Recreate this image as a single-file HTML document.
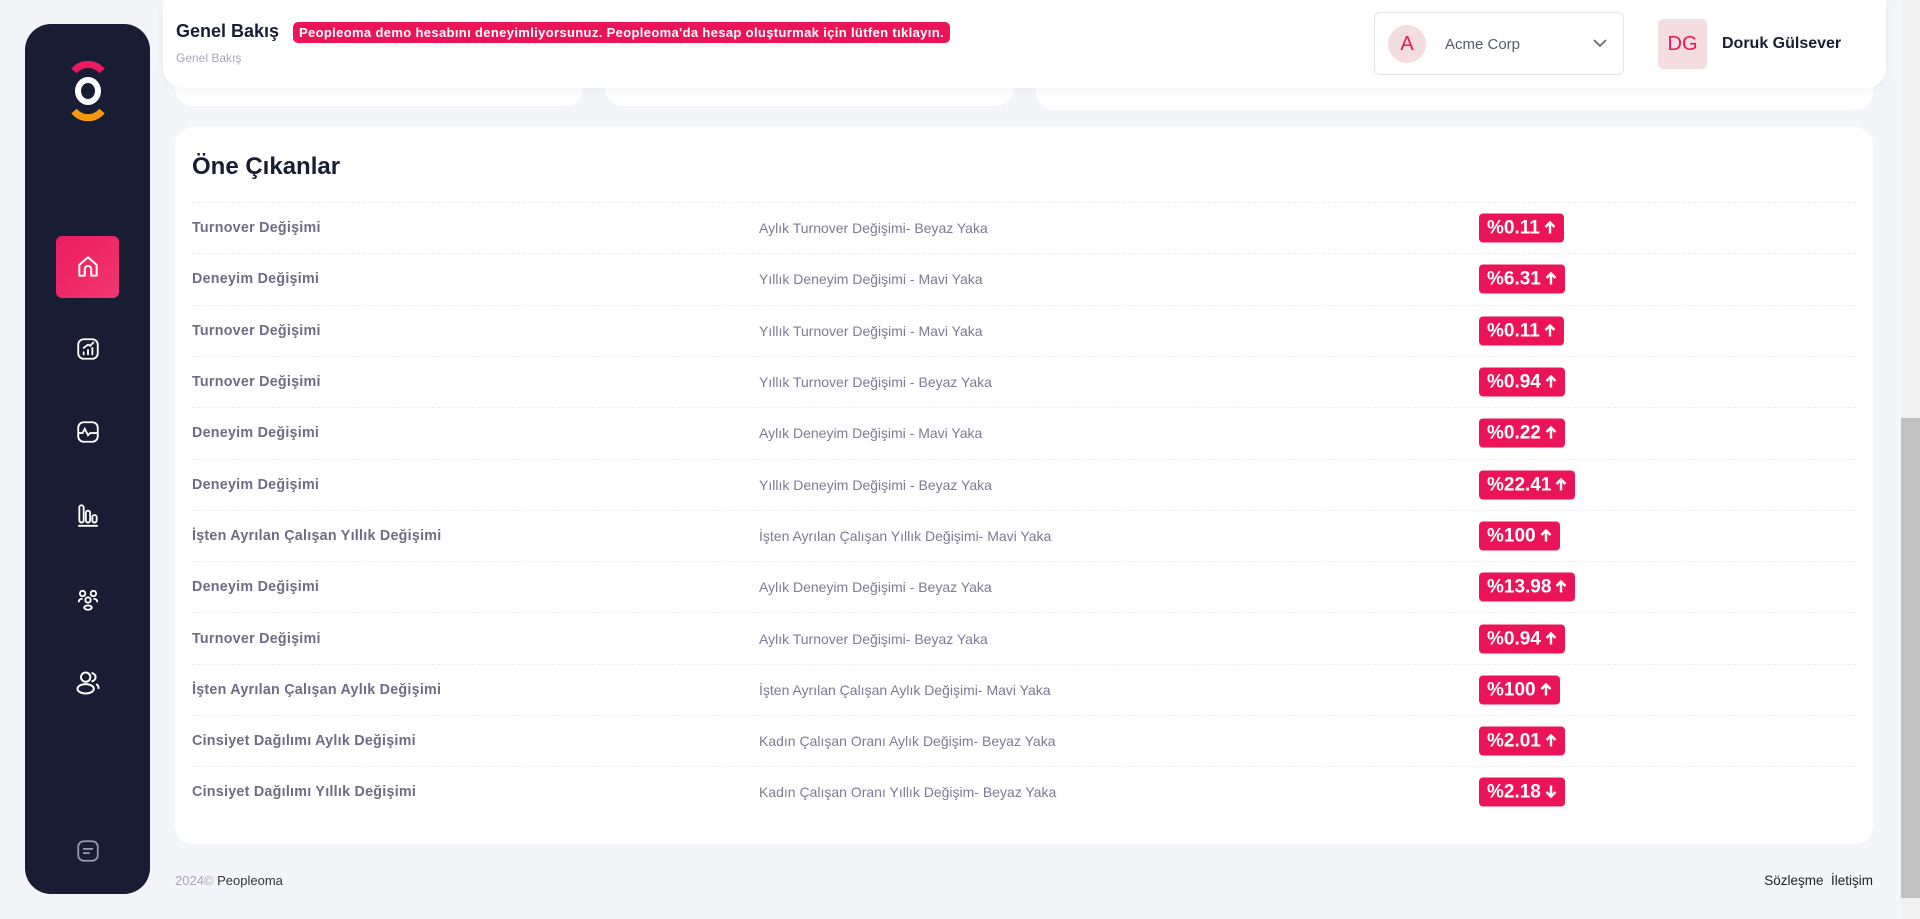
<!DOCTYPE html>
<html><head><meta charset="utf-8"><style>
*{box-sizing:border-box;margin:0;padding:0}
body{width:1920px;height:919px;overflow:hidden;background:#f3f5f9;font-family:"Liberation Sans",sans-serif;position:relative}
.sb{position:absolute;left:25px;top:24px;width:125px;height:870px;background:#181d33;border-radius:26px}
.ic{position:absolute;left:50%;transform:translate(-50%,-50%)}
.home{position:absolute;left:31px;top:212px;width:63px;height:62px;border-radius:6px;background:linear-gradient(135deg,#ec1b5f,#f0386e)}
.hdr{position:absolute;left:163px;top:0;width:1723px;height:88px;background:#fff;border-radius:0 0 20px 20px;box-shadow:0 2px 10px rgba(0,0,0,.05);z-index:3}
.card{position:absolute;background:#fff;border-radius:18px}
.row{position:absolute;left:17px;right:17px;height:51.3px;border-top:1px dashed #eceef3;font-size:14px}
.row span{position:absolute;top:50%;transform:translateY(-50%)}
.c1{left:0;font-weight:bold;color:#6e6c85;font-size:14.3px;letter-spacing:.25px}
.c2{left:567px;color:#7d7a93}
.b{left:1287px;background:#ec1459;color:#fff;font-weight:bold;font-size:19px;height:29px;line-height:29px;padding:0 8px;border-radius:4px;white-space:nowrap}
.b svg{margin-left:4px;vertical-align:-1px}
</style></head><body>
<div class="sb">
<svg class="ic" style="top:67px" width="40" height="64" viewBox="0 0 40 64"><path d="M6 12 A18 18 0 0 1 34 12" stroke="#ec1b5f" stroke-width="7" fill="none"/><path d="M6 52 A18 18 0 0 0 34 52" stroke="#f59a0c" stroke-width="7" fill="none"/><ellipse cx="20" cy="32" rx="10" ry="11" stroke="#fff" stroke-width="6" fill="none"/></svg>
<div class="home"></div>
<svg class="ic" style="top:243px" width="26" height="26" viewBox="0 0 24 24" fill="none" stroke="#fff" stroke-width="1.8" stroke-linejoin="round"><path d="M4 10 L12 3 L20 10 V20 H15 V14 A3 3 0 0 0 9 14 V20 H4 Z"/></svg>
<svg class="ic" style="top:325px" width="26" height="26" viewBox="0 0 24 24" fill="none" stroke="#fff" stroke-width="1.7" stroke-linecap="round"><rect x="3" y="3" width="18" height="18" rx="5"/><path d="M8 17v-2M12 17v-4M16 17v-6M8 11l4-3 2 1 3-3"/></svg>
<svg class="ic" style="top:408px" width="26" height="26" viewBox="0 0 24 24" fill="none" stroke="#fff" stroke-width="1.7"><rect x="3" y="3" width="18" height="18" rx="5"/><path d="M3 13h4l2-4 3 6 2-2h7"/></svg>
<svg class="ic" style="top:491px" width="26" height="26" viewBox="0 0 24 24" fill="none" stroke="#fff" stroke-width="1.7"><rect x="4" y="3" width="4" height="16" rx="2"/><rect x="10" y="8" width="4" height="11" rx="2"/><rect x="16" y="12" width="4" height="7" rx="2"/><path d="M3 22h18"/></svg>
<svg class="ic" style="top:576px" width="26" height="26" viewBox="0 0 24 24" fill="none" stroke="#fff" stroke-width="1.7"><circle cx="7" cy="6" r="2.5"/><circle cx="17" cy="6" r="2.5"/><circle cx="12" cy="12" r="2.5"/><ellipse cx="12" cy="19" rx="3.5" ry="2"/><path d="M4 14a3 2 0 0 1 3-3M20 14a3 2 0 0 0-3-3"/></svg>
<svg class="ic" style="top:659px" width="28" height="28" viewBox="0 0 24 24" fill="none" stroke="#fff" stroke-width="1.7"><circle cx="10" cy="7" r="4"/><ellipse cx="10" cy="17" rx="7" ry="4"/><path d="M15 3.5a3.5 3.5 0 0 1 0 7M19 13a4 4 0 0 1 2 4"/></svg>
<svg class="ic" style="top:827px" width="26" height="26" viewBox="0 0 24 24" fill="none" stroke="#9a9cad" stroke-width="1.6" stroke-linecap="round"><rect x="3" y="3" width="18" height="18" rx="5"/><path d="M8 10h8M8 14h5"/></svg>
</div>
<div class="hdr">
<div style="position:absolute;left:13px;top:21px;font-size:18px;font-weight:bold;color:#181d33">Genel Bakış</div>
<div style="position:absolute;left:130px;top:22px;height:21px;line-height:21px;padding:0 6px;background:#ec1459;color:#fff;font-weight:bold;font-size:13px;letter-spacing:.35px;border-radius:5px">Peopleoma demo hesabını deneyimliyorsunuz. Peopleoma'da hesap oluşturmak için lütfen tıklayın.</div>
<div style="position:absolute;left:13px;top:51px;font-size:12px;color:#a6a8b8">Genel Bakış</div>
<div style="position:absolute;left:1211px;top:12px;width:250px;height:63px;border:1px solid #e4e5ec;border-radius:6px">
<div style="position:absolute;left:13px;top:12px;width:38px;height:38px;border-radius:50%;background:#f4dde1;color:#ec1459;font-size:20px;text-align:center;line-height:38px">A</div>
<div style="position:absolute;left:70px;top:23px;font-size:15px;color:#555a6e">Acme Corp</div>
<svg style="position:absolute;left:218px;top:25px" width="14" height="10" viewBox="0 0 14 10" fill="none" stroke="#666" stroke-width="1.6"><path d="M1 2l6 6 6-6"/></svg>
</div>
<div style="position:absolute;left:1495px;top:19px;width:49px;height:50px;border-radius:5px;background:#f4dde1;color:#ec1459;font-size:20px;text-align:center;line-height:50px">DG</div>
<div style="position:absolute;left:1559px;top:35px;font-size:16px;font-weight:bold;color:#181d33">Doruk Gülsever</div>
</div>
<div class="card" style="left:175px;top:60px;width:408px;height:46px"></div>
<div class="card" style="left:605px;top:60px;width:409px;height:46px"></div>
<div class="card" style="left:1036px;top:60px;width:837px;height:50px"></div>
<div class="card" style="left:175px;top:127px;width:1698px;height:717px">
<div style="position:absolute;left:17px;top:26px;font-size:24px;font-weight:bold;color:#181d33">Öne Çıkanlar</div>
<div style="position:absolute;left:0;top:75px;width:100%">
<div class="row" style="top:0"><span class="c1">Turnover Değişimi</span><span class="c2">Aylık Turnover Değişimi- Beyaz Yaka</span><span class="b">%0.11<svg width="12" height="14" viewBox="0 0 12 14" fill="none" stroke="#fff" stroke-width="2.4"><path d="M6 13V2M1.5 6.5L6 2l4.5 4.5"/></svg></span></div>
<div class="row" style="top:51.3px"><span class="c1">Deneyim Değişimi</span><span class="c2">Yıllık Deneyim Değişimi - Mavi Yaka</span><span class="b">%6.31<svg width="12" height="14" viewBox="0 0 12 14" fill="none" stroke="#fff" stroke-width="2.4"><path d="M6 13V2M1.5 6.5L6 2l4.5 4.5"/></svg></span></div>
<div class="row" style="top:102.6px"><span class="c1">Turnover Değişimi</span><span class="c2">Yıllık Turnover Değişimi - Mavi Yaka</span><span class="b">%0.11<svg width="12" height="14" viewBox="0 0 12 14" fill="none" stroke="#fff" stroke-width="2.4"><path d="M6 13V2M1.5 6.5L6 2l4.5 4.5"/></svg></span></div>
<div class="row" style="top:153.9px"><span class="c1">Turnover Değişimi</span><span class="c2">Yıllık Turnover Değişimi - Beyaz Yaka</span><span class="b">%0.94<svg width="12" height="14" viewBox="0 0 12 14" fill="none" stroke="#fff" stroke-width="2.4"><path d="M6 13V2M1.5 6.5L6 2l4.5 4.5"/></svg></span></div>
<div class="row" style="top:205.2px"><span class="c1">Deneyim Değişimi</span><span class="c2">Aylık Deneyim Değişimi - Mavi Yaka</span><span class="b">%0.22<svg width="12" height="14" viewBox="0 0 12 14" fill="none" stroke="#fff" stroke-width="2.4"><path d="M6 13V2M1.5 6.5L6 2l4.5 4.5"/></svg></span></div>
<div class="row" style="top:256.5px"><span class="c1">Deneyim Değişimi</span><span class="c2">Yıllık Deneyim Değişimi - Beyaz Yaka</span><span class="b">%22.41<svg width="12" height="14" viewBox="0 0 12 14" fill="none" stroke="#fff" stroke-width="2.4"><path d="M6 13V2M1.5 6.5L6 2l4.5 4.5"/></svg></span></div>
<div class="row" style="top:307.8px"><span class="c1">İşten Ayrılan Çalışan Yıllık Değişimi</span><span class="c2">İşten Ayrılan Çalışan Yıllık Değişimi- Mavi Yaka</span><span class="b">%100<svg width="12" height="14" viewBox="0 0 12 14" fill="none" stroke="#fff" stroke-width="2.4"><path d="M6 13V2M1.5 6.5L6 2l4.5 4.5"/></svg></span></div>
<div class="row" style="top:359.1px"><span class="c1">Deneyim Değişimi</span><span class="c2">Aylık Deneyim Değişimi - Beyaz Yaka</span><span class="b">%13.98<svg width="12" height="14" viewBox="0 0 12 14" fill="none" stroke="#fff" stroke-width="2.4"><path d="M6 13V2M1.5 6.5L6 2l4.5 4.5"/></svg></span></div>
<div class="row" style="top:410.4px"><span class="c1">Turnover Değişimi</span><span class="c2">Aylık Turnover Değişimi- Beyaz Yaka</span><span class="b">%0.94<svg width="12" height="14" viewBox="0 0 12 14" fill="none" stroke="#fff" stroke-width="2.4"><path d="M6 13V2M1.5 6.5L6 2l4.5 4.5"/></svg></span></div>
<div class="row" style="top:461.7px"><span class="c1">İşten Ayrılan Çalışan Aylık Değişimi</span><span class="c2">İşten Ayrılan Çalışan Aylık Değişimi- Mavi Yaka</span><span class="b">%100<svg width="12" height="14" viewBox="0 0 12 14" fill="none" stroke="#fff" stroke-width="2.4"><path d="M6 13V2M1.5 6.5L6 2l4.5 4.5"/></svg></span></div>
<div class="row" style="top:513px"><span class="c1">Cinsiyet Dağılımı Aylık Değişimi</span><span class="c2">Kadın Çalışan Oranı Aylık Değişim- Beyaz Yaka</span><span class="b">%2.01<svg width="12" height="14" viewBox="0 0 12 14" fill="none" stroke="#fff" stroke-width="2.4"><path d="M6 13V2M1.5 6.5L6 2l4.5 4.5"/></svg></span></div>
<div class="row" style="top:564.3px"><span class="c1">Cinsiyet Dağılımı Yıllık Değişimi</span><span class="c2">Kadın Çalışan Oranı Yıllık Değişim- Beyaz Yaka</span><span class="b">%2.18<svg width="12" height="14" viewBox="0 0 12 14" fill="none" stroke="#fff" stroke-width="2.4"><path d="M6 1v11M1.5 7.5L6 12l4.5-4.5"/></svg></span></div>
</div>
</div>
<div style="position:absolute;left:175px;top:873px;font-size:13px;color:#a6a8b8">2024© <span style="color:#333">Peopleoma</span></div>
<div style="position:absolute;right:47px;top:873px;font-size:13.5px;color:#222">Sözleşme&nbsp; İletişim</div>
<div style="position:absolute;left:1901px;top:0;width:19px;height:919px;background:#f1f1f1"></div>
<div style="position:absolute;left:1901px;top:418px;width:19px;height:480px;background:#c1c1c1"></div>
</body></html>
